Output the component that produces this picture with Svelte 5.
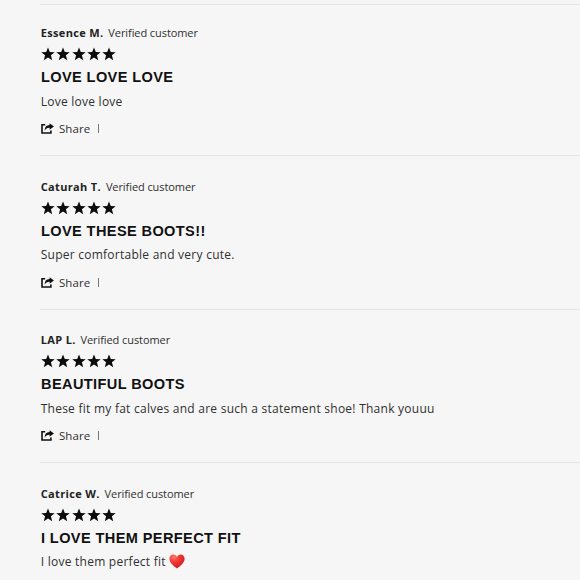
<script lang="ts">
const reviews = [
	{ name: "Essence M.", title: "LOVE LOVE LOVE", body: "Love love love", score: 5, share: true },
	{ name: "Caturah T.", title: "LOVE THESE BOOTS!!", body: "Super comfortable and very cute.", score: 5, share: true },
	{
		name: "LAP L.",
		title: "BEAUTIFUL BOOTS",
		body: "These fit my fat calves and are such a statement shoe! Thank youuu",
		score: 5,
		share: true,
	},
	{ name: "Catrice W.", title: "I LOVE THEM PERFECT FIT", body: "I love them perfect fit", score: 5, heart: true },
];
</script>

<div class="reviews">
	{#each reviews as review}
		<article class="review">
			<div class="author">
				<span class="name">{review.name}</span>
				<span class="verified">Verified customer</span>
			</div>

			<div class="stars">
				{#each Array(review.score) as _}
					<svg viewBox="0 0 14 14">
						<path d="M7 0.4 L8.8 5 L13.7 5.2 L9.9 8.3 L11.2 13.2 L7 10.5 L2.8 13.2 L4.1 8.3 L0.3 5.2 L5.2 5 Z" />
					</svg>
				{/each}
			</div>

			<h3>{review.title}</h3>

			<p>
				<span>{review.body}</span>
				{#if review.heart}
					<svg class="heart" viewBox="0 0 16 15">
						<defs>
							<radialGradient id="heart-fill" cx="0.3" cy="0.2" r="0.85">
								<stop offset="0" stop-color="#ff7a6c" />
								<stop offset="0.4" stop-color="#f23a35" />
								<stop offset="1" stop-color="#c81a20" />
							</radialGradient>
						</defs>
						<path
							fill="url(#heart-fill)"
							d="M8 14.6 C6.2 12.6 0.4 9.6 0.4 4.7 C0.4 2.2 2.2 0.5 4.3 0.5 C6.1 0.5 7.4 1.5 8 3.1 C8.6 1.5 9.9 0.5 11.7 0.5 C13.8 0.5 15.6 2.2 15.6 4.7 C15.6 9.6 9.8 12.6 8 14.6 Z"
						/>
					</svg>
				{/if}
			</p>

			{#if review.share}
				<div class="share">
					<svg viewBox="0 0 13 11">
						<path d="M4.2 1.8 H1 V10 H9.9 V7.4" fill="none" stroke="#111" stroke-width="1.6" />
						<path d="M8.6 0.2 L12.9 3.5 L8.6 6.8 V4.8 C6.3 4.7 4.9 5.4 3.8 7.8 C3.6 4.4 5.2 2.2 8.6 2.1 Z" fill="#111" />
					</svg>
					<span>Share</span>
					<i class="divider"></i>
				</div>
			{/if}
		</article>
	{/each}
</div>

<style>
	:global(body) {
		background: #f6f6f6;
		overflow: hidden;
	}

	.reviews {
		height: 580px;
		padding: 4px 0 0 40px;
		box-sizing: border-box;
		overflow: hidden;
		font-family: "Open Sans", "Noto Sans", sans-serif;
		color: #303030;
	}

	.review {
		height: 153.6px;
		padding: 21.9px 0 0 0.7px;
		box-sizing: border-box;
		border-top: 1px solid #e3e3e3;
	}

	.review:first-child {
		height: 151px;
		padding-top: 19.3px;
	}

	.author {
		display: flex;
		gap: 4.8px;
		height: 18px;
		line-height: 18px;
		font-size: 11px;
		white-space: nowrap;
	}

	.name {
		font-weight: 700;
		letter-spacing: 0.35px;
		color: #222;
	}

	.verified {
		letter-spacing: -0.08px;
	}

	.stars {
		display: flex;
		gap: 1.4px;
		height: 14px;
		margin: 5px 0 0 0.2px;
	}

	.stars svg {
		width: 14px;
		height: 14px;
		fill: #0c0c0c;
	}

	h3 {
		margin: 6px 0 0;
		height: 20px;
		line-height: 20px;
		font-family: "Liberation Sans", Arial, sans-serif;
		font-size: 14px;
		font-weight: 700;
		letter-spacing: 0.37px;
		color: #111;
		white-space: nowrap;
		transform: scaleX(1.04);
		transform-origin: left;
	}

	p {
		display: flex;
		align-items: center;
		gap: 3.5px;
		margin: 3.9px 0 0;
		height: 20px;
		font-size: 12px;
		letter-spacing: 0.25px;
		white-space: nowrap;
	}

	.heart {
		width: 16px;
		height: 15px;
	}

	.share {
		display: flex;
		align-items: center;
		height: 18px;
		margin: 8.5px 0 0 0.3px;
		font-size: 11.5px;
		letter-spacing: 0.05px;
	}

	.share svg {
		width: 13px;
		height: 11px;
		margin-right: 5px;
	}

	.divider {
		width: 1px;
		height: 9px;
		margin-left: 8px;
		background: #777;
	}
</style>
